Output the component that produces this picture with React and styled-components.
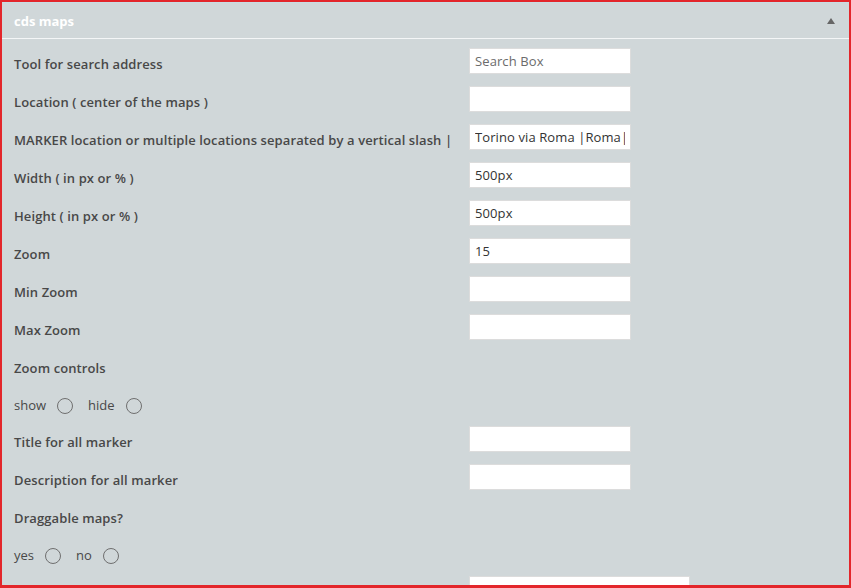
import React from 'react';
import styled, { createGlobalStyle } from 'styled-components';

const GlobalStyle = createGlobalStyle`
    html, body {
        margin: 0;
        padding: 0;
        background: #d0d7d9;
    }
    * {
        box-sizing: border-box;
    }
`;

const rows = [
    { type: 'input', label: 'Tool for search address', placeholder: 'Search Box' },
    { type: 'input', label: 'Location ( center of the maps )' },
    { type: 'input', label: 'MARKER location or multiple locations separated by a vertical slash |', value: 'Torino via Roma |Roma|Milano' },
    { type: 'input', label: 'Width ( in px or % )', value: '500px' },
    { type: 'input', label: 'Height ( in px or % )', value: '500px' },
    { type: 'input', label: 'Zoom', value: '15' },
    { type: 'input', label: 'Min Zoom' },
    { type: 'input', label: 'Max Zoom' },
    { type: 'title', label: 'Zoom controls' },
    { type: 'radio', name: 'zoomcontrols', options: ['show', 'hide'] },
    { type: 'input', label: 'Title for all marker' },
    { type: 'input', label: 'Description for all marker' },
    { type: 'title', label: 'Draggable maps?' },
    { type: 'radio', name: 'draggable', options: ['yes', 'no'] },
    { type: 'input', label: '', wide: true },
];

const App = () => {
    return (
        <>
            <GlobalStyle />
            <Frame>
                <Header>
                    <h2>cds maps</h2>
                    <Toggle />
                </Header>
                <Body>
                    {rows.map((row, i) => {
                        if (row.type === 'radio') {
                            return (
                                <RadioRow key={i}>
                                    {row.options.map((opt) => (
                                        <RadioLabel key={opt}>
                                            {opt}
                                            <Radio type="radio" name={row.name} />
                                        </RadioLabel>
                                    ))}
                                </RadioRow>
                            );
                        }
                        return (
                            <Row key={i}>
                                <Label>{row.label}</Label>
                                {row.type === 'input' && (
                                    <Field
                                        $wide={row.wide}
                                        placeholder={row.placeholder}
                                        defaultValue={row.value}
                                    />
                                )}
                            </Row>
                        );
                    })}
                </Body>
            </Frame>
        </>
    );
};

const Frame = styled.div`
    width: 851px;
    height: 588px;
    overflow: hidden;
    border: 2px solid #e3262b;
    border-bottom-width: 3px;
    background: #d0d7d9;
    font-family: "Open Sans", "Liberation Sans", sans-serif;
`;

const Header = styled.div`
    height: 37px;
    display: flex;
    align-items: center;
    justify-content: space-between;
    padding: 0 14px 0 12px;
    border-top: 1px solid #c8dde4;
    border-bottom: 1px solid #f4f6f7;
    h2 {
        margin: 0;
        font-size: 13px;
        font-weight: 700;
        color: #fff;
    }
`;

const Toggle = styled.span`
    width: 0;
    height: 0;
    border-left: 4px solid transparent;
    border-right: 4px solid transparent;
    border-bottom: 6px solid #666;
    margin-top: 1px;
`;

const Body = styled.div`
    padding: 6px 0 0 12px;
`;

const Row = styled.div`
    height: 38px;
    display: flex;
    align-items: center;
`;

const Label = styled.div`
    width: 455px;
    flex-shrink: 0;
    font-size: 13px;
    font-weight: 600;
    letter-spacing: 0.1px;
    color: #484848;
    white-space: nowrap;
`;

const Field = styled.input`
    width: ${(p) => (p.$wide ? '221px' : '162px')};
    height: 26px;
    margin-bottom: 6px;
    background: #fff;
    border: 1px solid #dcdcdc;
    padding: 0 5px;
    font-family: "Open Sans", "Liberation Sans", sans-serif;
    font-size: 13px;
    letter-spacing: 0.1px;
    color: #333;
    outline: none;
    &::placeholder {
        color: #6b6b6b;
    }
`;

const RadioRow = styled.div`
    height: 36px;
    display: flex;
    align-items: center;
    gap: 15px;
`;

const RadioLabel = styled.label`
    display: flex;
    align-items: center;
    gap: 11px;
    font-size: 13px;
    color: #484848;
`;

const Radio = styled.input`
    appearance: none;
    margin: 2px 0 0 0;
    width: 16px;
    height: 16px;
    border-radius: 50%;
    border: 1px solid #6f6f6f;
    background: #d0d7d9;
`;

export default App;
